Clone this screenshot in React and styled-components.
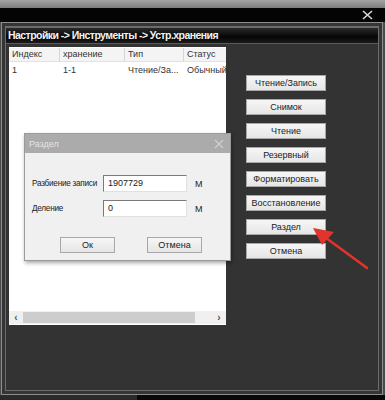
import React from 'react';
import styled, { createGlobalStyle } from 'styled-components';

const Global = createGlobalStyle`
  html, body { margin: 0; padding: 0; background: #2b2b2b; }
  * { box-sizing: border-box; }
`;

// ЭКРАН
const Screen = styled.div`
  position: relative;
  width: 385px;
  height: 400px;
  overflow: hidden;
  display: flex;
  flex-direction: column;
  background: #4a4a4a;
  font-family: "Liberation Sans", Arial, sans-serif;
`;

const TopStrip = styled.div`
  height: 8px;
  flex-shrink: 0;
  background: linear-gradient(#a4a4a4, #7c7c7c);
`;

const TitleBar = styled.div`
  height: 14px;
  flex-shrink: 0;
  background: #040404;
  display: flex;
  justify-content: flex-end;
  align-items: center;
  padding-right: 12px;
`;

// ОКНО
const Window = styled.div`
  margin-left: 1px;
  width: 382px;
  height: 373px;
  flex-shrink: 0;
  border: 1px solid #8e8e8e;
  background: #353535;
  padding: 3px;
  display: flex;
`;

const Inner = styled.div`
  flex: 1;
  border: 1px solid #6c6c6c;
  background: #333333;
  display: flex;
  flex-direction: column;
`;

const Heading = styled.div`
  height: 17px;
  border-top: 1px solid #6a6a6a;
  border-bottom: 1px solid #5a5a5a;
  background: linear-gradient(#2a2a2a, #050505 60%, #1a1a1a);
  color: #f2f2f2;
  font-weight: bold;
  font-size: 10.5px;
  letter-spacing: -0.55px;
  line-height: 15px;
  padding-left: 2px;
  white-space: nowrap;
`;

const Content = styled.div`
  display: flex;
  padding: 3px 0 0 3px;
`;

// СПИСОК
const List = styled.div`
  width: 217px;
  height: 278px;
  background: #ffffff;
  display: flex;
  flex-direction: column;
  overflow: hidden;
  font-size: 9px;
  color: #333;
`;

const HeadRow = styled.div`
  display: flex;
  height: 14px;
  margin-top: 1px;
  background: #f4f4f4;
  border-bottom: 1px solid #e2e2e2;
`;

const HeadCell = styled.div`
  width: ${p => p.w}px;
  flex-shrink: 0;
  padding-left: 3px;
  line-height: 13px;
  border-right: 1px solid #d6d6d6;
  white-space: nowrap;
  overflow: hidden;
`;

const Row = styled.div`
  display: flex;
  height: 13px;
  margin-top: 2px;
`;

const Cell = styled.div`
  width: ${p => p.w}px;
  flex-shrink: 0;
  padding-left: 3px;
  line-height: 13px;
  white-space: nowrap;
  overflow: hidden;
`;

const Spacer = styled.div`
  flex: 1;
`;

const Scroll = styled.div`
  height: 13px;
  display: flex;
  align-items: center;
  background: #f0f0f0;
  color: #555;
  font-size: 10px;
  margin-bottom: 1px;
`;

const Arrow = styled.div`
  width: 14px;
  text-align: center;
  font-weight: bold;
  line-height: 13px;
`;

const Thumb = styled.div`
  width: 172px;
  height: 11px;
  background: #cdcdcd;
`;

// КНОПКИ
const Buttons = styled.div`
  display: flex;
  flex-direction: column;
  gap: 8px;
  margin-left: 20px;
  padding-top: 28px;
`;

const Btn = styled.div`
  width: ${p => p.w || 80}px;
  height: 16px;
  background: linear-gradient(#f6f6f6, #e6e6e6);
  border: 1px solid #a8a8a8;
  color: #222;
  font-size: 9px;
  line-height: 14px;
  text-align: center;
  white-space: nowrap;
`;

// ДИАЛОГ
const Dialog = styled.div`
  position: absolute;
  left: 24px;
  top: 133px;
  width: 207px;
  height: 128px;
  background: #f0f0f0;
  border: 1px solid #9a9a9a;
  box-shadow: 1px 2px 4px rgba(0, 0, 0, 0.35);
  display: flex;
  flex-direction: column;
  font-size: 9px;
  color: #222;
`;

const DialogTitle = styled.div`
  height: 19px;
  background: #ababab;
  color: #e4e4e4;
  display: flex;
  align-items: center;
  justify-content: space-between;
  padding: 0 6px 0 4px;
  font-size: 9px;
`;

const DialogBody = styled.div`
  display: flex;
  flex-direction: column;
  gap: 8px;
  padding: 22px 0 0 7px;
`;

const Field = styled.div`
  display: flex;
  align-items: center;
  height: 17px;
`;

const Label = styled.div`
  width: 71px;
  flex-shrink: 0;
  white-space: nowrap;
  font-size: 8.2px;
  letter-spacing: -0.25px;
`;

const Input = styled.div`
  width: 84px;
  height: 17px;
  background: #fff;
  border-top: 1px solid #7a7a7a;
  border-left: 1px solid #7a7a7a;
  border-right: 1px solid #e0e0e0;
  border-bottom: 1px solid #e0e0e0;
  padding-left: 4px;
  line-height: 14px;
`;

const Unit = styled.div`
  margin-left: 8px;
`;

const DialogActions = styled.div`
  display: flex;
  gap: 32px;
  padding: 20px 0 0 35px;
`;

const ArrowSvg = styled.svg`
  position: absolute;
  left: 0;
  top: 0;
  pointer-events: none;
`;

const BottomStrip = styled.div`
  flex: 1;
  display: flex;
  background: #2a2a2a;
`;

const BottomDark = styled.div`
  margin-left: 137px;
  flex: 1;
  background: #080808;
`;

const cols = [51, 65, 59, 60];

export default function App() {
  return (
    <Screen>
      <Global />
      <TopStrip />
      <TitleBar>
        <svg width="11" height="10" viewBox="0 0 11 10">
          <path d="M1 1 L10 9 M10 1 L1 9" stroke="#d8d8d8" strokeWidth="1.6" />
        </svg>
      </TitleBar>

      <Window>
        <Inner>
          <Heading>Настройки -&gt; Инструменты -&gt; Устр.хранения</Heading>
          <Content>
            <List>
              <HeadRow>
                <HeadCell w={cols[0]}>Индекс</HeadCell>
                <HeadCell w={cols[1]}>хранение</HeadCell>
                <HeadCell w={cols[2]}>Тип</HeadCell>
                <HeadCell w={cols[3]}>Статус</HeadCell>
              </HeadRow>
              <Row>
                <Cell w={cols[0]}>1</Cell>
                <Cell w={cols[1]}>1-1</Cell>
                <Cell w={cols[2]}>Чтение/За...</Cell>
                <Cell w={cols[3]}>Обычный</Cell>
              </Row>
              <Spacer />
              <Scroll>
                <Arrow>‹</Arrow>
                <Thumb />
                <Spacer />
                <Arrow>›</Arrow>
              </Scroll>
            </List>

            <Buttons>
              <Btn>Чтение/Запись</Btn>
              <Btn>Снимок</Btn>
              <Btn>Чтение</Btn>
              <Btn>Резервный</Btn>
              <Btn>Форматировать</Btn>
              <Btn>Восстановление</Btn>
              <Btn>Раздел</Btn>
              <Btn>Отмена</Btn>
            </Buttons>
          </Content>
        </Inner>
      </Window>
      <BottomStrip>
        <BottomDark />
      </BottomStrip>

      <Dialog>
        <DialogTitle>
          <span>Раздел</span>
          <svg width="10" height="10" viewBox="0 0 10 10">
            <path d="M1 1 L9 9 M9 1 L1 9" stroke="#d0d0d0" strokeWidth="1.1" />
          </svg>
        </DialogTitle>
        <DialogBody>
          <Field>
            <Label>Разбиение записи</Label>
            <Input>1907729</Input>
            <Unit>M</Unit>
          </Field>
          <Field>
            <Label>Деление</Label>
            <Input>0</Input>
            <Unit>M</Unit>
          </Field>
        </DialogBody>
        <DialogActions>
          <Btn w={55}>Ок</Btn>
          <Btn w={55}>Отмена</Btn>
        </DialogActions>
      </Dialog>

      <ArrowSvg width="385" height="400">
        <line x1="367" y1="268" x2="322" y2="235" stroke="#e2342c" strokeWidth="2.5" strokeLinecap="round" />
        <polygon points="313,228 334,232 322,245" fill="#e2342c" />
      </ArrowSvg>
    </Screen>
  );
}
